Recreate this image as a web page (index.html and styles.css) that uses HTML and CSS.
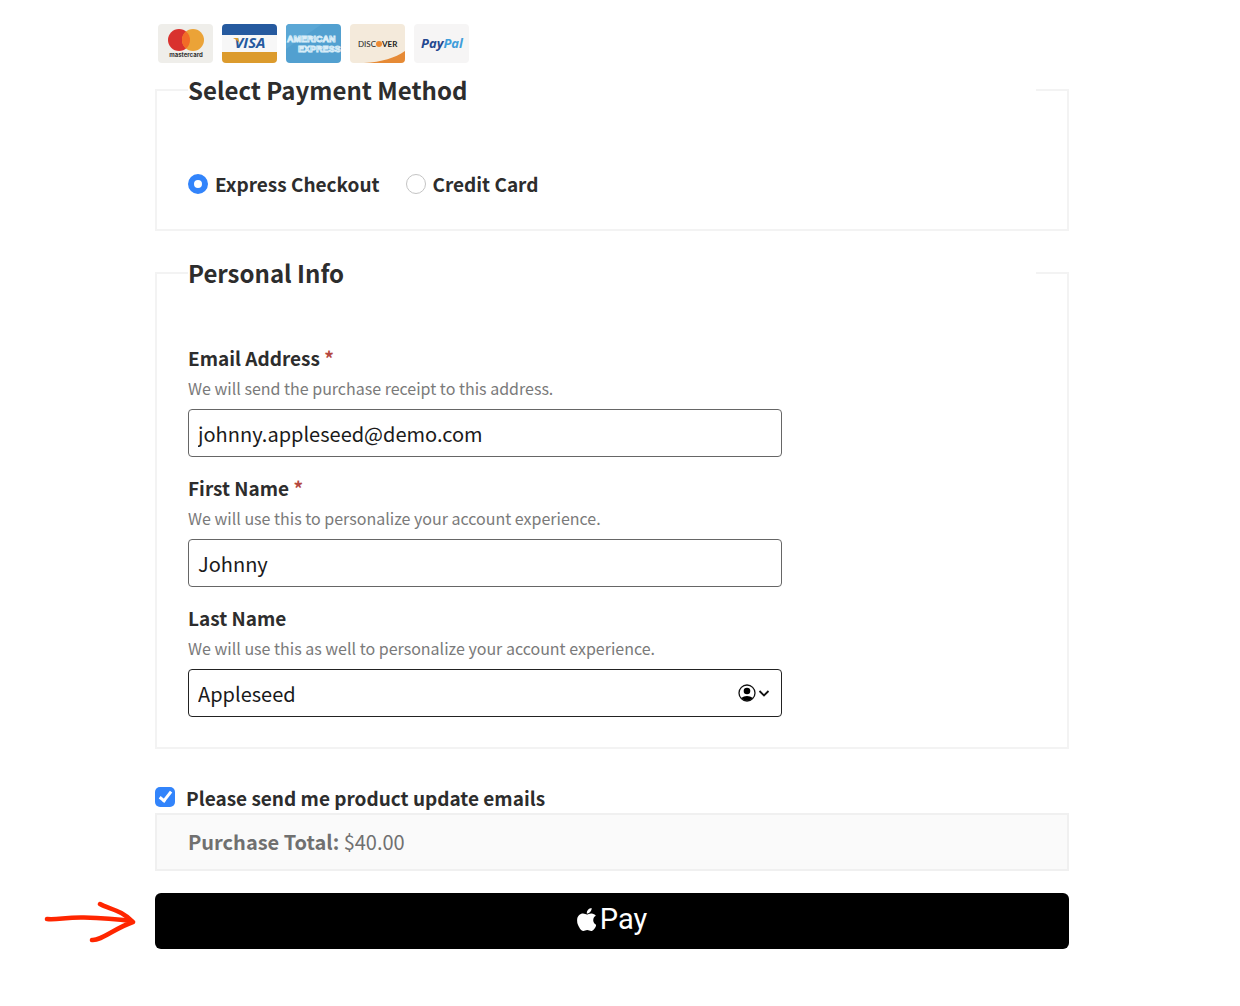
FILE: index.html
```html
<!DOCTYPE html>
<html lang="en">
<head>
  <meta charset="UTF-8">
  <meta name="viewport" content="width=device-width, initial-scale=1.0">
  <title>Checkout</title>
  <link rel="stylesheet" href="styles.css">
</head>
<body>
  <form class="checkout">
    <div class="payment-icons">
      <svg class="card-icon" viewBox="0 0 55 39" role="img" aria-label="Mastercard">
        <rect width="55" height="39" rx="4" fill="#efeeea"/>
        <circle cx="21" cy="16" r="11" fill="#d9322e"/>
        <circle cx="35" cy="16" r="11" fill="#eba337"/>
        <path d="M28 7.500a11 11 0 0 1 0 17a11 11 0 0 1 0-17z" fill="#f26b27"/>
        <text class="mastercard-text" x="28" y="33" text-anchor="middle">mastercard</text>
      </svg>
      <svg class="card-icon" viewBox="0 0 55 39" role="img" aria-label="Visa">
        <rect width="55" height="39" rx="4" fill="#f7f7f7"/>
        <path d="M0 11V4a4 4 0 0 1 4-4h47a4 4 0 0 1 4 4v7z" fill="#265a9f"/>
        <path d="M0 28v7a4 4 0 0 0 4 4h47a4 4 0 0 0 4-4v-7z" fill="#dc9b2d"/>
        <text class="visa-text" x="28" y="24" text-anchor="middle">VISA</text>
        <path d="M11 14h5l2 6c-1-2-3-4-7-6z" fill="#dc9b2d"/>
      </svg>
      <svg class="card-icon" viewBox="0 0 55 39" role="img" aria-label="American Express">
        <rect width="55" height="39" rx="4" fill="#52a0d0"/>
        <path d="M0 25L36 0H4a4 4 0 0 0-4 4z" fill="#5ba7d5"/>
        <text class="amex-text" x="1" y="18">AMERICAN</text>
        <text class="amex-text" x="12" y="28">EXPRESS</text>
      </svg>
      <svg class="card-icon" viewBox="0 0 55 39" role="img" aria-label="Discover">
        <rect width="55" height="39" rx="4" fill="#f4eadb"/>
        <path d="M14 39C32 38 45 34 55 27v8a4 4 0 0 1-4 4z" fill="#e68a35"/>
        <text class="discover-text" x="8" y="23">DISC</text>
        <circle cx="29" cy="20" r="3" fill="#ec8a33"/>
        <text class="discover-text bold" x="32" y="23">VER</text>
      </svg>
      <svg class="card-icon" viewBox="0 0 55 39" role="img" aria-label="PayPal">
        <rect width="55" height="39" rx="4" fill="#f6f5f5"/>
        <text class="paypal-text" x="28" y="24" text-anchor="middle">Pay<tspan fill="#3f9edb">Pal</tspan></text>
      </svg>
    </div>

    <fieldset class="payment-method">
      <legend>Select Payment Method</legend>
      <div class="radio-row">
        <label><input type="radio" name="method" value="express" checked>Express Checkout</label>
        <label><input type="radio" name="method" value="card">Credit Card</label>
      </div>
    </fieldset>

    <fieldset class="personal-info">
      <legend>Personal Info</legend>
      <div class="field">
        <label for="email">Email Address <span class="required">*</span></label>
        <p class="hint">We will send the purchase receipt to this address.</p>
        <input type="email" id="email" value="johnny.appleseed@demo.com">
      </div>
      <div class="field">
        <label for="first">First Name <span class="required">*</span></label>
        <p class="hint">We will use this to personalize your account experience.</p>
        <input type="text" id="first" value="Johnny">
      </div>
      <div class="field">
        <label for="last">Last Name</label>
        <p class="hint">We will use this as well to personalize your account experience.</p>
        <div class="input-wrap">
          <input type="text" id="last" class="active" value="Appleseed">
          <svg class="autofill-icon" viewBox="0 0 32 18" aria-hidden="true">
            <circle cx="9" cy="9" r="8" fill="#fff" stroke="#111" stroke-width="1.300"/>
            <circle cx="9" cy="7" r="3.300" fill="#000"/>
            <path d="M3 14q6-4 12 0q-6 5-12 0z" fill="#000"/>
            <path d="M21.500 7l4.500 4.500L30.500 7" fill="none" stroke="#111" stroke-width="1.800"/>
          </svg>
        </div>
      </div>
    </fieldset>

    <label class="updates"><input type="checkbox" checked>Please send me product update emails</label>

    <div class="total"><strong>Purchase Total:</strong> $40.00</div>

    <div class="pay">
      <svg class="arrow" viewBox="0 0 92 42" aria-hidden="true">
        <path d="M3 18C14 19 22 16 40 16.500S72 18 88 20M56 3C65 8 78 9 89 21M48 39C57 40 71 27 89 21" fill="none" stroke="#ff2600" stroke-width="4.500" stroke-linecap="round" stroke-linejoin="round"/>
      </svg>
      <button type="button" class="pay-button" aria-label="Apple Pay">
        <svg class="apple" viewBox="4 32 366 448" aria-hidden="true">
          <path fill="#fff" d="M318.700 268.700c-.2-36.700 16.400-64.400 50-84.800-18.800-26.900-47.200-41.700-84.700-44.600-35.500-2.800-74.300 20.700-88.500 20.700-15 0-49.400-19.700-76.400-19.700C63.300 141.200 4 184.800 4 273.500q0 39.300 14.400 81.200c12.800 36.700 59 126.700 107.200 125.200 25.200-.6 43-17.900 75.800-17.900 31.800 0 48.300 17.900 76.400 17.900 48.600-.7 90.400-82.500 102.600-119.300-65.200-30.700-61.700-90-61.700-91.900zm-56.600-164.200c27.300-32.400 24.800-61.900 24-72.500-24.100 1.400-52 16.400-67.900 34.900-17.500 19.800-27.800 44.300-25.600 71.900 26.100 2 49.900-11.400 69.500-34.200z"/>
        </svg>
        <span>Pay</span>
      </button>
    </div>
  </form>
</body>
</html>
```

FILE: styles.css
```css
* {
  box-sizing: border-box;
}

body {
  margin: 0;
  background-color: #fff;
  color: #2d2d2d;
  font-family: "Noto Sans CJK SC", "Open Sans", sans-serif;
  font-size: 19px;
  line-height: 30px;
}

.checkout {
  padding: 24px 171px 40px 155px;
}

.payment-icons {
  display: flex;
  gap: 9px;
  padding-left: 3px;
  margin-bottom: 7px;
}

.card-icon {
  display: block;
  width: 55px;
  height: 39px;
}

.mastercard-text {
  font: bold 6px Inter, sans-serif;
  fill: #333;
}

.visa-text {
  font: italic bold 15px "Open Sans", sans-serif;
  fill: #265a9f;
}

.amex-text {
  font: bold 9px "Liberation Sans", sans-serif;
  fill: #52a0d0;
  stroke: #d8edf8;
  stroke-width: 1px;
}

.discover-text {
  font: 8px Lato, sans-serif;
  fill: #222;
}

.discover-text.bold {
  font-weight: bold;
}

.paypal-text {
  font: italic bold 13px "Open Sans", sans-serif;
  fill: #24478f;
}

fieldset {
  margin: 0 0 22px;
  padding: 0 31px;
  border: 2px solid #f3f3f3;
  min-width: 0;
}

legend {
  width: 100%;
  padding: 0;
  font-size: 24px;
  font-weight: bold;
  line-height: 40px;
}

label {
  font-weight: bold;
}

.payment-method {
  padding-top: 59px;
  padding-bottom: 30px;
}

.radio-row {
  display: flex;
  gap: 26px;
}

.radio-row label {
  display: flex;
  align-items: center;
  gap: 7px;
}

input[type="radio"] {
  appearance: none;
  width: 20px;
  height: 20px;
  margin: 0;
  border: 1px solid #c4c4c4;
  border-radius: 50%;
  background-color: #fff;
}

input[type="radio"]:checked {
  border: 6px solid #3284fb;
}

.personal-info {
  padding-top: 50px;
  padding-bottom: 30px;
  margin-bottom: 34px;
}

.field {
  max-width: 594px;
  margin-bottom: 16px;
}

.field:last-child {
  margin-bottom: 0;
}

.field label {
  display: block;
}

.required {
  color: #b5483f;
}

.hint {
  margin: 0 0 6px;
  color: #7a7a7a;
  font-size: 16px;
}

.field input {
  display: block;
  width: 100%;
  height: 48px;
  padding: 0 9px;
  border: 1px solid #666;
  border-radius: 4px;
  background-color: #fff;
  color: #1a1a1a;
  font-family: inherit;
  font-size: 20px;
}

.field input.active {
  border-color: #222;
}

.input-wrap {
  position: relative;
}

.autofill-icon {
  position: absolute;
  top: 15px;
  right: 12px;
  width: 32px;
  height: 18px;
}

.updates {
  display: flex;
  gap: 11px;
}

input[type="checkbox"] {
  appearance: none;
  display: grid;
  place-items: center;
  width: 20px;
  height: 20px;
  margin: 4px 0 0;
  border-radius: 5px;
  background-color: #3284fb;
}

input[type="checkbox"]:checked::after {
  content: "";
  width: 4px;
  height: 10px;
  margin-bottom: 3px;
  border: solid #fff;
  border-width: 0 3px 3px 0;
  transform: rotate(38deg);
}

.total {
  padding: 12px 31px;
  border: 2px solid #f0f0f0;
  background-color: #fafafa;
  color: #707070;
  font-size: 20px;
}

.pay {
  position: relative;
  margin-top: 22px;
}

.arrow {
  position: absolute;
  top: 8px;
  left: -111px;
  width: 92px;
  height: 42px;
}

.pay-button {
  display: flex;
  align-items: center;
  justify-content: center;
  gap: 4px;
  width: 100%;
  height: 56px;
  padding: 0 0 4px;
  border: 0;
  border-radius: 6px;
  background-color: #000;
  color: #fff;
  font-family: Roboto, sans-serif;
  font-size: 29px;
  cursor: pointer;
}

.apple {
  width: 19px;
  height: 23px;
}
```
